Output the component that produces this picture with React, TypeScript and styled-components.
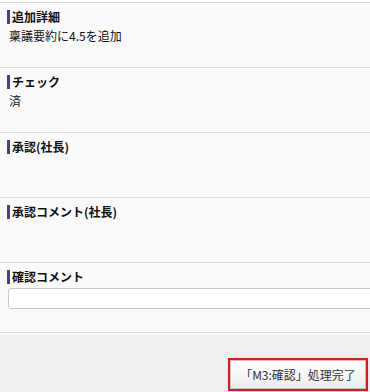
import React from 'react';
import styled, { createGlobalStyle } from 'styled-components';

const GlobalStyle = createGlobalStyle`
  html, body {
    margin: 0;
    padding: 0;
    background: #fff;
  }
  body {
    font-family: "Noto Sans CJK JP", "Noto Sans", sans-serif;
    color: #222;
  }
`;

interface FieldProps {
  label: string;
  value?: string;
}

const fields: FieldProps[] = [
  { label: '追加詳細', value: '稟議要約に4.5を追加' },
  { label: 'チェック', value: '済' },
  { label: '承認(社長)' },
  { label: '承認コメント(社長)' },
];

const App: React.FC = () => {
  return (
    <>
      <GlobalStyle />
      <Page>
        {fields.map(f => (
          <Section key={f.label}>
            <Label>{f.label}</Label>
            {f.value && <Value>{f.value}</Value>}
          </Section>
        ))}
        <Section $tall>
          <Label>確認コメント</Label>
          <CommentInput type="text" />
        </Section>
        <Footer>
          <FooterBody>
            <Highlight>
              <ActionButton>「M3:確認」処理完了</ActionButton>
            </Highlight>
          </FooterBody>
        </Footer>
      </Page>
    </>
  );
};

const Page = styled.div`
  width: 370px;
  height: 392px;
  padding-top: 2px;
  box-sizing: border-box;
  overflow: hidden;
`;

const Section = styled.div<{ $tall?: boolean }>`
  height: ${p => (p.$tall ? 70 : 65)}px;
  box-sizing: border-box;
  background: #fafafa;
  border-top: 1px solid #dcdcdc;
  padding: 7px 0 0 9px;
  display: flex;
  flex-direction: column;
`;

const Label = styled.div`
  font-size: 12px;
  font-weight: bold;
  line-height: 14px;
  color: #111;
  border-left: 3px solid #4b3d8f;
  padding-left: 2px;
  margin-left: -2px;
`;

const Value = styled.div`
  font-size: 12px;
  line-height: 16px;
  margin-top: 4px;
  color: #111;
`;

const CommentInput = styled.input`
  margin: 4px 0 0 -1px;
  width: 372px;
  height: 21px;
  box-sizing: border-box;
  border: 1px solid #c8c8c8;
  border-radius: 3px;
  background: #fff;
  outline: none;
`;

const Footer = styled.div`
  border-top: 1px solid #dcdcdc;
  padding-top: 2px;
  background: #fafafa;
`;

const FooterBody = styled.div`
  height: 57px;
  box-sizing: border-box;
  background: #efefef;
  display: flex;
  justify-content: flex-end;
  align-items: flex-end;
  padding: 0 2px 1px 0;
`;

const Highlight = styled.div`
  border: 2px solid #e8141c;
  display: flex;
`;

const ActionButton = styled.button`
  width: 136px;
  height: 29px;
  border: 1px solid #c4c4c4;
  background: linear-gradient(#ffffff, #ececec);
  font-family: "Noto Sans CJK JP", "Noto Sans", sans-serif;
  font-size: 12px;
  color: #333;
  padding: 0;
  cursor: pointer;
`;

export default App;
